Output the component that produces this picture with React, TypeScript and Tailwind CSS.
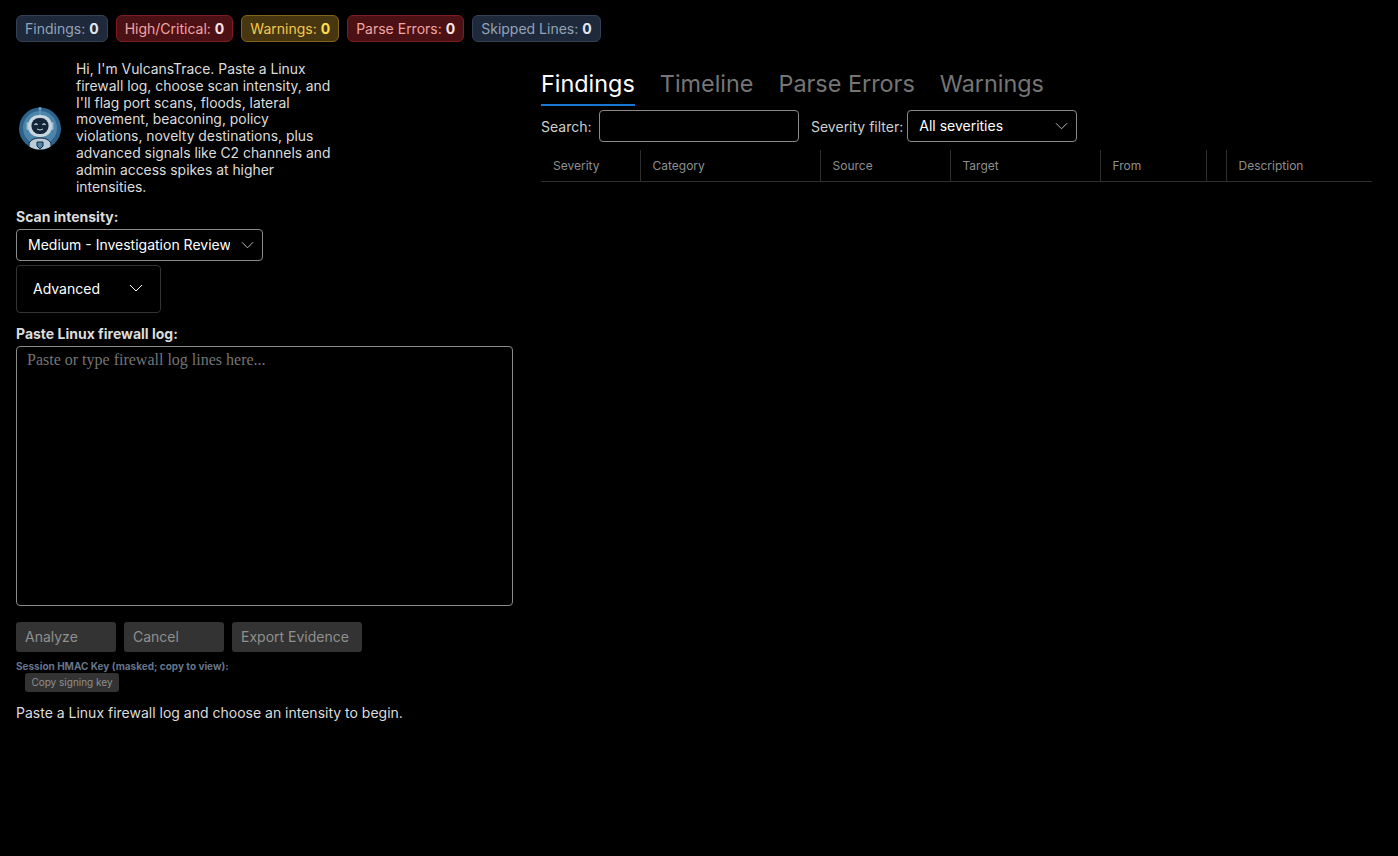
import React from 'react';

const stats = [
  { label: 'Findings', box: 'border-[#334155] bg-[#1e293b] text-[#94a3b8]', value: 'text-[#e2e8f0]' },
  { label: 'High/Critical', box: 'border-[#7f1d1d] bg-[#4c1114] text-[#f0a5a5]', value: 'text-[#fee2e2]' },
  { label: 'Warnings', box: 'border-[#84631a] bg-[#483610] text-[#f2c94c]', value: 'text-[#fde047]' },
  { label: 'Parse Errors', box: 'border-[#7f1d1d] bg-[#4c1114] text-[#f0a5a5]', value: 'text-[#fee2e2]' },
  { label: 'Skipped Lines', box: 'border-[#334155] bg-[#1e293b] text-[#94a3b8]', value: 'text-[#e2e8f0]' },
];

const tabs = ['Findings', 'Timeline', 'Parse Errors', 'Warnings'];

const columns = [
  { name: 'Severity', width: 'w-[99px] px-3' },
  { name: 'Category', width: 'w-[180px] px-3' },
  { name: 'Source', width: 'w-[130px] px-3' },
  { name: 'Target', width: 'w-[150px] px-3' },
  { name: 'From', width: 'w-[106px] px-3' },
  { name: '', width: 'w-[20px] px-0' },
  { name: 'Description', width: 'px-3' },
];

const Chevron = ({ className }: { className: string }) => (
  <svg viewBox="0 0 14 8" fill="none" stroke="currentColor" strokeWidth="1" className={className}>
    <path d="M1 1l6 6 6-6" />
  </svg>
);

const Avatar = () => (
  <svg viewBox="0 0 42 44" className="w-[42px] h-[44px] shrink-0">
    <defs>
      <clipPath id="avatar-clip">
        <circle cx="21" cy="22.5" r="21" />
      </clipPath>
    </defs>
    <circle cx="21" cy="22.5" r="21" fill="#2d628c" />
    <circle cx="21" cy="22" r="17" fill="#4d84a9" />
    <circle cx="21" cy="2.5" r="1.5" fill="#6f9fc0" />
    <rect x="20.4" y="3" width="1.2" height="6" fill="#6f9fc0" />
    <g clipPath="url(#avatar-clip)">
      <path d="M10 46v-7c0-4 4-7 11-7s11 3 11 7v7z" fill="#b9cbd8" stroke="#14253a" strokeWidth="1" />
      <path d="M18 36h6v4l-3 3-3-3z" fill="#4d84a9" stroke="#14253a" strokeWidth="1" />
    </g>
    <rect x="7.5" y="16" width="2.5" height="8" rx="1.2" fill="#9dbbd0" />
    <rect x="32" y="16" width="2.5" height="8" rx="1.2" fill="#9dbbd0" />
    <rect x="9" y="9" width="24" height="22" rx="10.5" fill="#c8d6e0" />
    <rect x="12.5" y="12" width="17" height="16" rx="7.5" fill="#14253a" />
    <path d="M15.5 19q1.5-2.4 3 0M23.5 19q1.5-2.4 3 0" stroke="#c8d6e0" strokeWidth="1.2" fill="none" />
    <path d="M18 23q3 2.2 6 0" stroke="#c8d6e0" strokeWidth="1" fill="none" />
  </svg>
);

export default function App() {
  return (
    <div className="min-h-[856px] bg-black text-[#dcdcdc] font-['Inter',sans-serif] text-[14px] px-4 pt-[15px]">
      <div className="flex gap-2">
        {stats.map((s) => (
          <div key={s.label} className={`h-[27px] px-2 flex items-center gap-1 rounded-md border ${s.box}`}>
            <span>{s.label}:</span>
            <b className={s.value}>0</b>
          </div>
        ))}
      </div>

      <div className="flex mt-[10px]">
        <div className="w-[497px] shrink-0">
          <div className="flex items-center pt-[9px] pl-[3px] gap-[15px]">
            <Avatar />
            <p className="w-[260px] text-[13.9px] leading-[16.8px]">
              Hi, I'm VulcansTrace. Paste a Linux firewall log, choose scan intensity, and I'll flag port scans, floods,
              lateral movement, beaconing, policy violations, novelty destinations, plus advanced signals like C2 channels
              and admin access spikes at higher intensities.
            </p>
          </div>

          <label className="block mt-[13px] font-bold leading-[17px]">Scan intensity:</label>
          <div className="relative w-[247px] mt-[4px]">
            <select className="w-full h-8 pl-[11px] pr-8 pb-[2px] appearance-none bg-black text-white border border-[#8a8a8a] rounded-[4px] outline-none">
              <option>Medium - Investigation Review</option>
            </select>
            <Chevron className="absolute right-[9px] top-[12px] w-[13px] h-[8px] text-[#c4c4c4] pointer-events-none" />
          </div>

          <button className="mt-[4px] w-[145px] h-[48px] pl-4 pr-[17px] pb-[2px] flex items-center justify-between bg-black border border-[#333] rounded-[4px] text-white">
            <span>Advanced</span>
            <Chevron className="w-[14px] h-[8px] text-white" />
          </button>

          <label className="block mt-[12px] font-bold leading-[17px]">Paste Linux firewall log:</label>
          <textarea
            placeholder="Paste or type firewall log lines here..."
            className="block mt-[4px] w-[497px] h-[260px] px-[10px] py-[1px] bg-black border border-[#8a8a8a] rounded-[4px] outline-none resize-none font-['Liberation_Serif',serif] text-[16px] placeholder:text-[#757575]"
          />

          <div className="flex gap-2 mt-4">
            <button disabled className="w-[100px] h-[30px] px-[9px] pb-[2px] text-left bg-[#333] rounded-[3px] text-[#8f8f8f]">Analyze</button>
            <button disabled className="w-[100px] h-[30px] px-[9px] pb-[2px] text-left bg-[#333] rounded-[3px] text-[#8f8f8f]">Cancel</button>
            <button disabled className="w-[130px] h-[30px] px-[9px] pb-[2px] text-left bg-[#333] rounded-[3px] text-[#8f8f8f]">Export Evidence</button>
          </div>

          <div className="mt-[9px] text-[10px] leading-[11px] font-bold text-[#64748b]">Session HMAC Key (masked; copy to view):</div>
          <button disabled className="block ml-[9px] mt-px w-[94px] h-[19px] bg-[#333] rounded-[3px] text-[10px] text-[#8f8f8f]">Copy signing key</button>

          <p className="mt-[12px] leading-[17px]">Paste a Linux firewall log and choose an intensity to begin.</p>
        </div>

        <div className="ml-7 flex-1">
          <div className="flex gap-[25px] h-[39px] mt-[15px]">
            {tabs.map((t, i) => (
              <div
                key={t}
                className={`h-[39px] text-[23.4px] leading-[34px] border-b-2 ${i === 0 ? 'text-white border-[#1976d2]' : 'text-[#757575] border-transparent'}`}
              >
                {t}
              </div>
            ))}
          </div>

          <div className="flex items-center mt-[4px] h-8">
            <span className="w-[58px] text-[#cfcfcf]">Search:</span>
            <input className="w-[200px] h-8 bg-black border border-[#8a8a8a] rounded-[4px] outline-none" />
            <span className="ml-3 text-[#cfcfcf] mr-1">Severity filter:</span>
            <div className="relative w-[170px]">
              <select className="w-full h-8 pl-[11px] pr-8 pb-[2px] appearance-none bg-black text-white border border-[#8a8a8a] rounded-[4px] outline-none">
                <option>All severities</option>
              </select>
              <Chevron className="absolute right-[9px] top-[12px] w-[13px] h-[8px] text-[#c4c4c4] pointer-events-none" />
            </div>
          </div>

          <table className="w-[831px] mt-2 table-fixed border-collapse text-[12px]">
            <thead>
              <tr className="h-[31px] border-b border-[#2e2e2e]">
                {columns.map((c, i) => (
                  <th
                    key={i}
                    className={`${c.width} pt-[2px] text-left font-normal text-[#8f8f8f] ${i < columns.length - 1 ? 'border-r border-[#2e2e2e]' : ''}`}
                  >
                    {c.name}
                  </th>
                ))}
              </tr>
            </thead>
          </table>
        </div>
      </div>
    </div>
  );
}
